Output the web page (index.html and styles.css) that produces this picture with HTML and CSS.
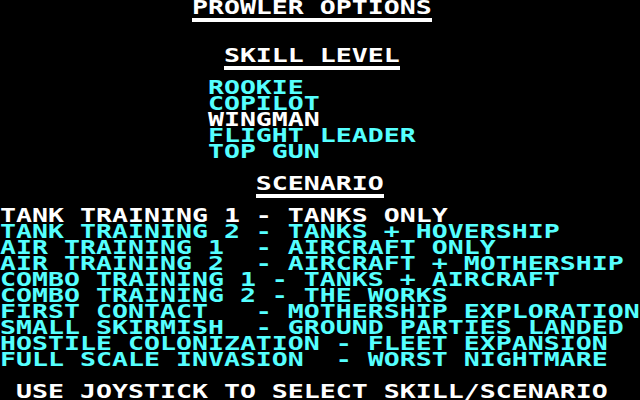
FILE: index.html
```html
<!DOCTYPE html>
<html>
<head>
<meta charset="utf-8">
<title>Prowler Options</title>
<link rel="stylesheet" href="styles.css">
</head>
<body>
<main class="screen">
  <div class="row white"><span class="txt">            PROWLER OPTIONS</span></div>
  <div class="row"><div class="rule rule-title"></div></div>
  <div class="row"></div>
  <div class="row white"><span class="txt">              SKILL LEVEL</span></div>
  <div class="row"><div class="rule rule-skill"></div></div>
  <div class="row cyan"><span class="txt">             ROOKIE</span></div>
  <div class="row cyan"><span class="txt">             COPILOT</span></div>
  <div class="row white"><span class="txt">             WINGMAN</span></div>
  <div class="row cyan"><span class="txt">             FLIGHT LEADER</span></div>
  <div class="row cyan"><span class="txt">             TOP GUN</span></div>
  <div class="row"></div>
  <div class="row white"><span class="txt">                SCENARIO</span></div>
  <div class="row"><div class="rule rule-scen"></div></div>
  <div class="row white"><span class="txt">TANK TRAINING 1 - TANKS ONLY</span></div>
  <div class="row cyan"><span class="txt">TANK TRAINING 2 - TANKS + HOVERSHIP</span></div>
  <div class="row cyan"><span class="txt">AIR TRAINING 1  - AIRCRAFT ONLY</span></div>
  <div class="row cyan"><span class="txt">AIR TRAINING 2  - AIRCRAFT + MOTHERSHIP</span></div>
  <div class="row cyan"><span class="txt">COMBO TRAINING 1 - TANKS + AIRCRAFT</span></div>
  <div class="row cyan"><span class="txt">COMBO TRAINING 2 - THE WORKS</span></div>
  <div class="row cyan"><span class="txt">FIRST CONTACT   - MOTHERSHIP EXPLORATION</span></div>
  <div class="row cyan"><span class="txt">SMALL SKIRMISH  - GROUND PARTIES LANDED</span></div>
  <div class="row cyan"><span class="txt">HOSTILE COLONIZATION - FLEET EXPANSION</span></div>
  <div class="row cyan"><span class="txt">FULL SCALE INVASION  - WORST NIGHTMARE</span></div>
  <div class="row"></div>
  <div class="row white"><span class="txt"> USE JOYSTICK TO SELECT SKILL/SCENARIO</span></div>
</main>
</body>
</html>
```
FILE: styles.css
```css
/* 40x25 text mode: 16x16 character cells on a 640x400 screen */
html, body {
  margin: 0;
  padding: 0;
  background: #000;
}

.screen {
  width: 640px;
  height: 400px;
  overflow: hidden;
  background: #000;
  display: flex;
  flex-direction: column;
}

.row {
  height: 16px;
  flex: 0 0 16px;
  overflow: visible;
}

.txt {
  display: block;
  white-space: pre;
  font-family: "DejaVu Sans Mono", monospace;
  font-weight: bold;
  font-size: 26.576px;
  line-height: 16px;
  height: 16px;
  transform: scaleY(0.72);
  transform-origin: 50% 50%;
}

.white { color: #ffffff; }
.cyan  { color: #55ffff; }

.rule {
  height: 4px;
  margin-top: 2px;
  background: #ffffff;
}
.rule-title { margin-left: 192px; width: 240px; }
.rule-skill { margin-left: 224px; width: 176px; }
.rule-scen  { margin-left: 256px; width: 128px; }
```
